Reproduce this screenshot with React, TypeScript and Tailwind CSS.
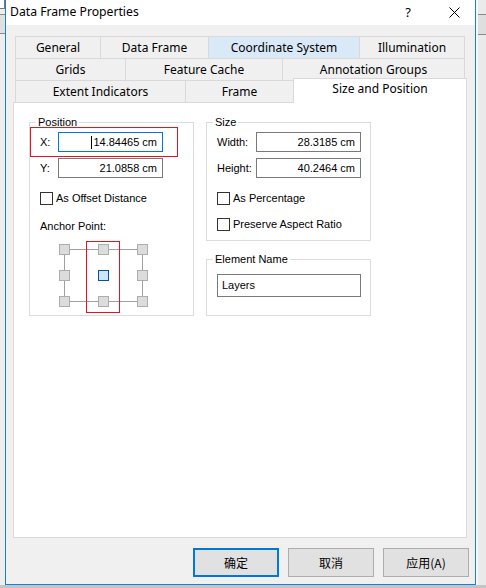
import React from "react";

const tabFont = { fontFamily: '"Noto Sans", "Noto Sans CJK SC", sans-serif' } as const;
const labelFont = { fontFamily: '"Liberation Sans", Arial, sans-serif' } as const;
const cjkFont = { fontFamily: '"Noto Sans CJK SC", "Noto Sans", sans-serif' } as const;

function Tab({ w, label, active, hover }: { w: number; label: string; active?: boolean; hover?: boolean }) {
  return (
    <div
      style={{ width: w }}
      className={
        "-ml-px first:ml-0 h-[23px] flex items-center justify-center border border-[#d9d9d9] text-[12px] text-black leading-none " +
        (hover ? "bg-[#d9e9f8]" : "bg-[#f0f0f0]")
      }
    >
      {label}
    </div>
  );
}

function Checkbox({ label }: { label: string }) {
  return (
    <div className="flex items-center h-[13px]">
      <div className="w-[13px] h-[13px] border border-[#333333] bg-white shrink-0" />
      <span className="ml-[3px] text-[11px] leading-none text-black">{label}</span>
    </div>
  );
}

function Field({ value, focused, caret, w = 105 }: { value: string; focused?: boolean; caret?: boolean; w?: number }) {
  return (
    <div
      style={{ width: w }}
      className={
        "h-[20px] bg-white flex items-center justify-end pr-[5px] text-[11px] leading-none text-black border " +
        (focused ? "border-[#0078d7]" : "border-[#7a7a7a]")
      }
    >
      {caret && <span className="inline-block w-px h-[13px] bg-black mr-px" />}
      <span>{value}</span>
    </div>
  );
}

function AnchorGrid() {
  const xs = [3, 42, 81];
  const ys = [5, 31, 57];
  return (
    <svg width="94" height="76" viewBox="0 0 94 76" className="block">
      <rect x="8.5" y="10.5" width="78" height="52" fill="none" stroke="#a0a0a0" strokeWidth="1" />
      {ys.map((y, r) =>
        xs.map((x, c) => {
          const center = r === 1 && c === 1;
          return (
            <rect
              key={`${r}-${c}`}
              x={x + 0.5}
              y={y + 0.5}
              width="10"
              height="10"
              fill={center ? "#cce4f7" : "#dcdcdc"}
              stroke={center ? "#005499" : "#adadad"}
              strokeWidth="1"
            />
          );
        })
      )}
      <rect x="30.5" y="2.5" width="33" height="71" fill="none" stroke="#e81123" strokeWidth="1" />
    </svg>
  );
}

function Button({ label, primary }: { label: string; primary?: boolean }) {
  return (
    <div
      style={cjkFont}
      className={
        "w-[86px] h-[29px] flex items-center justify-center bg-[#e1e1e1] text-[12px] text-black " +
        (primary ? "border-2 border-[#0078d7]" : "border border-[#adadad]")
      }
    >
      {label}
    </div>
  );
}

export default function App() {
  return (
    <div className="w-[486px] h-[588px] bg-[#c4c4c4] flex items-start overflow-hidden">
      {/* left strip behind dialog */}
      <div className="w-[5px] h-[585px] bg-[#eeeeee] flex flex-col">
        <div className="h-[9px] bg-white border-b border-r border-[#7a7a7a]" />
        <div className="h-[5px]" />
        <div className="h-px bg-[#8a8a8a]" />
        <div className="h-[18px] bg-[#e0e0e0]" />
        <div className="h-px bg-[#8a8a8a]" />
      </div>

      {/* dialog */}
      <div className="w-[471px] h-[585px] border-x border-b border-[#1a7fd6] flex flex-col bg-[#f0f0f0]">
        {/* title bar */}
        <div className="h-[25px] bg-white flex items-center shrink-0" style={tabFont}>
          <span className="ml-[4px] text-[12.2px] text-black leading-none">Data Frame Properties</span>
          <span className="ml-auto text-[13px] text-black leading-none mr-[38px]">?</span>
          <svg width="11" height="11" viewBox="0 0 11 11" className="mr-[15px]">
            <path d="M0.5 0.5 L10.5 10.5 M10.5 0.5 L0.5 10.5" stroke="#000" strokeWidth="1" />
          </svg>
        </div>

        {/* body */}
        <div className="flex-1 flex flex-col pt-[11px] pl-[7px]">
          {/* tabs */}
          <div className="ml-[2px] flex flex-col" style={tabFont}>
            <div className="flex">
              <Tab w={86} label="General" />
              <Tab w={109} label="Data Frame" />
              <Tab w={152} label="Coordinate System" hover />
              <Tab w={106} label="Illumination" />
            </div>
            <div className="flex -mt-px">
              <Tab w={111} label="Grids" />
              <Tab w={158} label="Feature Cache" />
              <Tab w={183} label="Annotation Groups" />
            </div>
            <div className="flex items-end -mt-[3px]">
              <Tab w={171} label="Extent Indicators" />
              <Tab w={109} label="Frame" />
              <div className="-ml-px relative z-10 w-[174px] h-[25px] bg-white border border-b-0 border-[#d9d9d9] flex items-start justify-center pt-[4px] text-[12px] leading-none text-black">
                Size and Position
              </div>
            </div>
          </div>

          {/* panel */}
          <div className="-mt-px w-[454px] h-[436px] bg-white border border-[#d9d9d9] flex items-start gap-[12px] pl-[15px] pt-[12px]" style={labelFont}>
            {/* Position */}
            <fieldset className="w-[165px] h-[201px] border border-[#dcdcdc] flex flex-col">
              <legend className="ml-[6px] px-[2px] text-[11px] leading-[14px] text-black">Position</legend>
              <div className="relative flex items-center mt-[3px] pl-[10px]">
                <span className="w-[18px] text-[11px] leading-none">X:</span>
                <Field value="14.84465 cm" focused caret />
                <div className="absolute left-0 -top-[5px] w-[148px] h-[30px] border border-[#e81123]" />
              </div>
              <div className="flex items-center mt-[6px] pl-[10px]">
                <span className="w-[18px] text-[11px] leading-none">Y:</span>
                <Field value="21.0858 cm" />
              </div>
              <div className="mt-[14px] pl-[10px]">
                <Checkbox label="As Offset Distance" />
              </div>
              <div className="mt-[14px] pl-[10px] text-[11px] leading-[14px]">Anchor Point:</div>
              <div className="mt-[6px] pl-[26px]">
                <AnchorGrid />
              </div>
            </fieldset>

            {/* right column */}
            <div className="flex flex-col">
              <fieldset className="w-[165px] h-[126px] border border-[#dcdcdc] flex flex-col">
                <legend className="ml-[6px] px-[2px] text-[11px] leading-[14px] text-black">Size</legend>
                <div className="flex items-center mt-[3px] pl-[10px]">
                  <span className="w-[39px] text-[11px] leading-none">Width:</span>
                  <Field value="28.3185 cm" />
                </div>
                <div className="flex items-center mt-[6px] pl-[10px]">
                  <span className="w-[39px] text-[11px] leading-none">Height:</span>
                  <Field value="40.2464 cm" />
                </div>
                <div className="mt-[14px] pl-[10px]">
                  <Checkbox label="As Percentage" />
                </div>
                <div className="mt-[13px] pl-[10px]">
                  <Checkbox label="Preserve Aspect Ratio" />
                </div>
              </fieldset>

              <fieldset className="mt-[11px] w-[165px] h-[64px] border border-[#dcdcdc] flex flex-col">
                <legend className="ml-[6px] px-[2px] text-[11px] leading-[14px] text-black">Element Name</legend>
                <div className="mt-[8px] pl-[10px]">
                  <div className="w-[144px] h-[23px] border border-[#7a7a7a] bg-white flex items-center pl-[4px] text-[11px] leading-none text-black">
                    Layers
                  </div>
                </div>
              </fieldset>
            </div>
          </div>

          {/* buttons */}
          <div className="mt-[10px] flex justify-end gap-[9px] pr-[6px]">
            <Button label="确定" primary />
            <Button label="取消" />
            <Button label="应用(A)" />
          </div>
        </div>
      </div>

      {/* right strip */}
      <div className="flex-1 h-[585px] bg-[#eaeaea] flex">
        <div className="w-[2px] bg-[#f7f7f7]" />
        <div className="flex-1 flex flex-col">
          <div className="h-[14px]" />
          <div className="h-px bg-[#8a8a8a]" />
          <div className="h-[19px] bg-[#dedede]" />
          <div className="h-px bg-[#8a8a8a]" />
        </div>
      </div>
    </div>
  );
}
